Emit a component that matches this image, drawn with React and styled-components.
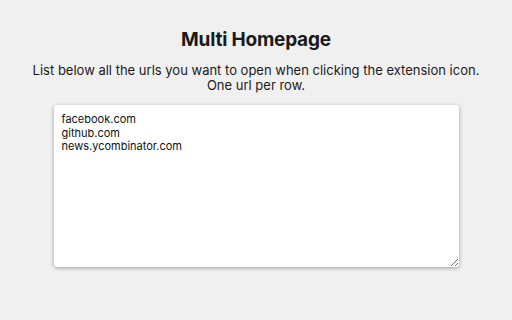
import { useEffect, useRef } from "react";
import styled, { createGlobalStyle } from "styled-components";

const GlobalStyle = createGlobalStyle`
  html, body {
    margin: 0;
    padding: 0;
    background: #f0f0f0;
  }
  body {
    font-family: Inter, "Liberation Sans", sans-serif;
    color: #1a1a1a;
  }
`;

const Page = styled.div`
  width: 512px;
  height: 320px;
  display: flex;
  flex-direction: column;
  align-items: center;
  padding-top: 28px;
  box-sizing: border-box;
`;

const Title = styled.h1`
  margin: 0;
  font-size: 19px;
  font-weight: 700;
  line-height: 24px;
  letter-spacing: -0.2px;
`;

const Subtitle = styled.p`
  margin: 11px 0 0;
  font-size: 13px;
  line-height: 14.5px;
  text-align: center;
`;

const UrlList = styled.textarea`
  margin-top: 13px;
  width: 405px;
  height: 162px;
  box-sizing: border-box;
  border: none;
  border-radius: 3px;
  background: #fff;
  box-shadow: 0 1px 4px rgba(0, 0, 0, 0.35);
  padding: 8px 8px;
  font-family: Inter, "Liberation Sans", sans-serif;
  font-size: 11px;
  line-height: 13.5px;
  color: #111;
  caret-color: #000;
  outline: none;
  resize: both;
`;

export default function App() {
  const listRef = useRef(null);

  useEffect(() => {
    const el = listRef.current;
    if (el) {
      el.focus();
      el.setSelectionRange(el.value.length, el.value.length);
    }
  }, []);

  return (
    <>
      <GlobalStyle />
      <Page>
        <Title>Multi Homepage</Title>
        <Subtitle>
          List below all the urls you want to open when clicking the extension icon.
          <br />
          One url per row.
        </Subtitle>
        <UrlList
          ref={listRef}
          defaultValue={"facebook.com\ngithub.com\nnews.ycombinator.com"}
          spellCheck={false}
        />
      </Page>
    </>
  );
}
